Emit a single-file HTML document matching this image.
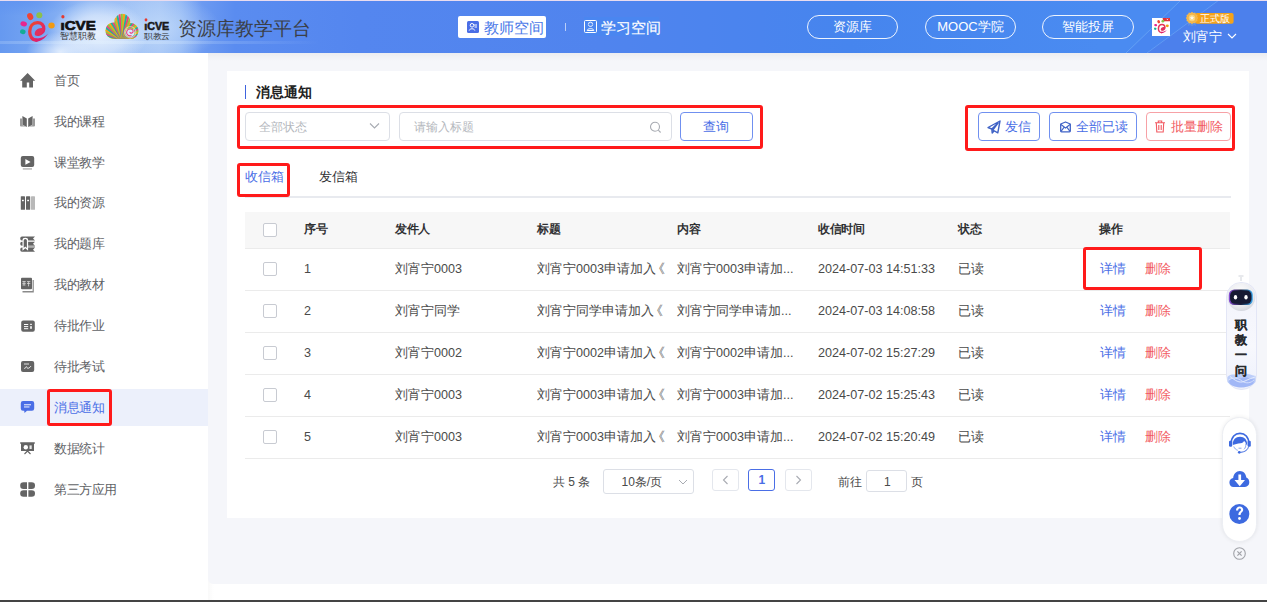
<!DOCTYPE html>
<html><head><meta charset="utf-8">
<style>
*{box-sizing:border-box;margin:0;padding:0}
html,body{width:1267px;height:602px;overflow:hidden;background:#fff;font-family:"Liberation Sans",sans-serif;}
.abs{position:absolute}
#hdr{position:absolute;left:0;top:0;width:1267px;height:53px;overflow:hidden;
 background:
  radial-gradient(ellipse 34px 20px at 60px 52px,rgba(238,246,255,.85),rgba(238,246,255,0) 100%),
  radial-gradient(ellipse 50px 34px at 98px 34px,rgba(236,244,254,.95),rgba(236,244,254,.6) 55%,rgba(236,244,254,0) 100%),
  radial-gradient(ellipse 60px 34px at 160px 28px,rgba(196,220,250,.75),rgba(196,220,250,0) 100%),
  radial-gradient(ellipse 60px 16px at 20px 0px,rgba(94,146,240,.8),rgba(94,146,240,0) 100%),
  linear-gradient(90deg,#6699f0 0px,#76a5f2 40px,#98bdf5 90px,#a5c5f6 160px,#92b8f5 180px,#6c9af1 202px,#5a8cf0 235px,#5486ef 360px,#5084ee 600px,#4a84ee 760px,#4685ee 850px,#4a8bf1 1100px,#4a8bf1 1267px)}
#side{position:absolute;left:0;top:53px;width:208px;height:547px;background:#fff}
#main{position:absolute;left:208px;top:53px;width:1059px;height:531px;background:#f5f6fa;border-bottom-left-radius:5px}
#card{position:absolute;left:227px;top:71px;width:1022px;height:447px;background:#fff}
.nt{position:absolute;left:54px;font-size:12.8px;letter-spacing:-0.4px;line-height:20px;color:#606266;white-space:nowrap}
.nt.on{color:#4a6ee6}
.red{position:absolute;border:3px solid #ff1a1a;border-radius:3px}
.tx{position:absolute;white-space:nowrap;line-height:20px;font-size:13px}
.rowl{position:absolute;left:245px;width:985px;height:1px;background:#ebebeb}
.cb{position:absolute;width:14px;height:14px;border:1px solid #c8cbd2;border-radius:2px;background:#fff}
.c{position:absolute;font-size:12.6px;color:#4a4a4a;white-space:nowrap;line-height:20px}
.btn{position:absolute;height:29px;border:1px solid #7090f0;border-radius:4px;background:#fff}
.pill{position:absolute;top:15px;height:24px;border:1px solid rgba(255,255,255,.9);border-radius:12px;color:#fff;font-size:13px;line-height:22px;text-align:center}
</style></head><body>

<div id="hdr">
 <div class="abs" style="left:0;top:0;width:1267px;height:1px;background:#e9dcef"></div>
 <div class="abs" style="left:0;top:41px;width:320px;height:3px;background:linear-gradient(90deg,rgba(220,238,255,.2),rgba(230,245,255,.3) 120px,rgba(220,238,255,.15) 240px,rgba(220,238,255,0))"></div>
 <!-- logo 1 -->
 <svg class="abs" style="left:0;top:0" width="330" height="53" viewBox="0 0 330 53">
  <defs>
   <linearGradient id="eg" x1="0" y1="0" x2="1" y2="1"><stop offset="0" stop-color="#ec4a2a"/><stop offset=".6" stop-color="#e42a5a"/><stop offset="1" stop-color="#dc1f73"/></linearGradient>
   <clipPath id="cl"><circle cx="113.6" cy="30.6" r="8.2"/><circle cx="122.3" cy="21.6" r="7.9"/><circle cx="130.5" cy="31" r="8"/><rect x="113" y="28" width="18" height="10.8"/></clipPath>
  </defs>
  <ellipse cx="30.2" cy="16.6" rx="2.9" ry="3.6" fill="#ee4536" transform="rotate(-25 30.2 16.6)"/>
  <ellipse cx="39.3" cy="15.3" rx="3" ry="3" fill="#8cc04b"/>
  <ellipse cx="23.7" cy="23.9" rx="3.3" ry="2.4" fill="#e6268f" transform="rotate(15 23.7 23.9)"/>
  <ellipse cx="22.8" cy="31.8" rx="2.8" ry="2.4" fill="#14ad96" transform="rotate(15 22.8 31.8)"/>
  <ellipse cx="51.5" cy="25.5" rx="3.2" ry="3" fill="#f29a12"/>
  <path d="M36.5 40 C32 40 29.6 36 29.7 31.5 C29.8 26 33 22.6 37.5 22.6 C41.5 22.6 44 25.5 43.8 28.8 C43.6 32 41 34 38.3 34.3" fill="none" stroke="url(#eg)" stroke-width="3.3" stroke-linecap="round"/>
  <path d="M34.8 34.5 C34.2 31.5 36.5 28.8 40 28.2 L43.5 27.8 C43.8 31.5 41.5 35 38.5 35.8 C36.8 36.2 35.2 35.8 34.8 34.5 Z" fill="#e2305e"/>
  <path d="M35 41.6 C40 42.2 45 38.5 48 33.8 C44.5 36.8 40.5 38.6 36.5 38.4 Z" fill="#dc2070"/>
  <ellipse cx="62.9" cy="16.8" rx="1.6" ry="1.8" fill="#e5392e"/>
  <text x="60.5" y="30" font-family="Liberation Sans" font-weight="bold" font-size="12.8" fill="#111" stroke="#111" stroke-width=".7" textLength="35.3" lengthAdjust="spacingAndGlyphs">ıCVE</text>
  <text x="60" y="39.2" font-size="8.6" fill="#2e2e2e" textLength="35.6" lengthAdjust="spacingAndGlyphs">智慧职教</text>
  <g clip-path="url(#cl)">
   <rect x="100" y="10" width="45" height="32" fill="#f1e7d0"/>
   <g id="rays" stroke-width="2.1" fill="none"><path d="M122.5 40 L82.5 40.0" stroke="#ee3f7c"/><path d="M122.5 40 L82.7 36.4" stroke="#8cc63f"/><path d="M122.5 40 L83.2 32.8" stroke="#f7a21b"/><path d="M122.5 40 L84.0 29.2" stroke="#1fb59b"/><path d="M122.5 40 L85.1 25.8" stroke="#ee3f7c"/><path d="M122.5 40 L86.5 22.5" stroke="#8cc63f"/><path d="M122.5 40 L88.3 19.3" stroke="#f7a21b"/><path d="M122.5 40 L90.3 16.3" stroke="#1fb59b"/><path d="M122.5 40 L92.6 13.4" stroke="#ee3f7c"/><path d="M122.5 40 L95.1 10.8" stroke="#8cc63f"/><path d="M122.5 40 L97.9 8.5" stroke="#f7a21b"/><path d="M122.5 40 L100.8 6.4" stroke="#1fb59b"/><path d="M122.5 40 L104.0 4.6" stroke="#ee3f7c"/><path d="M122.5 40 L107.3 3.0" stroke="#8cc63f"/><path d="M122.5 40 L110.7 1.8" stroke="#f7a21b"/><path d="M122.5 40 L114.2 0.9" stroke="#1fb59b"/><path d="M122.5 40 L117.8 0.3" stroke="#ee3f7c"/><path d="M122.5 40 L121.4 0.0" stroke="#8cc63f"/><path d="M122.5 40 L125.0 0.1" stroke="#f7a21b"/><path d="M122.5 40 L128.6 0.5" stroke="#1fb59b"/><path d="M122.5 40 L132.2 1.2" stroke="#ee3f7c"/><path d="M122.5 40 L135.7 2.2" stroke="#8cc63f"/><path d="M122.5 40 L139.0 3.6" stroke="#f7a21b"/><path d="M122.5 40 L142.3 5.2" stroke="#1fb59b"/><path d="M122.5 40 L145.3 7.2" stroke="#ee3f7c"/><path d="M122.5 40 L148.2 9.4" stroke="#8cc63f"/><path d="M122.5 40 L150.9 11.8" stroke="#f7a21b"/><path d="M122.5 40 L153.3 14.5" stroke="#1fb59b"/><path d="M122.5 40 L155.5 17.4" stroke="#ee3f7c"/><path d="M122.5 40 L157.4 20.5" stroke="#8cc63f"/><path d="M122.5 40 L159.0 23.7" stroke="#f7a21b"/><path d="M122.5 40 L160.4 27.1" stroke="#1fb59b"/><path d="M122.5 40 L161.4 30.6" stroke="#ee3f7c"/><path d="M122.5 40 L162.1 34.2" stroke="#8cc63f"/><path d="M122.5 40 L162.4 37.8" stroke="#f7a21b"/><path d="M122.5 40 L162.5 41.4" stroke="#1fb59b"/></g>
   <circle cx="130.2" cy="32.2" r="5.6" fill="none" stroke="#f1e7d0" stroke-width="1.2" opacity=".6"/>
   <circle cx="130" cy="32.5" r="4.6" fill="#d6e8fb"/>
   <path d="M131.5 35.5 C129 36.5 126.5 35 126.6 32.3 C126.8 29.5 129.5 28.2 131.8 29.2 C133.5 30 133.6 32.3 132 33 C130.8 33.5 129.8 32.8 130 31.8" fill="none" stroke="#ee3f7c" stroke-width="1.1"/>
   <path d="M127.5 29 C129 27.8 131.5 27.8 133 29" fill="none" stroke="#8cc63f" stroke-width=".9"/>
   </g>
  <ellipse cx="146" cy="19.8" rx="1.4" ry="1.6" fill="#e5392e"/>
  <text x="144.2" y="29.5" font-weight="bold" font-size="10.6" fill="#1a1a1a" stroke="#1a1a1a" stroke-width=".55" textLength="25.1" lengthAdjust="spacingAndGlyphs">ıCVE</text>
  <text x="143.8" y="38.6" font-size="8.4" fill="#2f2f2f" textLength="26.2" lengthAdjust="spacingAndGlyphs">职教云</text>
 </svg>
 <div class="abs" style="left:177.5px;top:15.5px;font-size:18.7px;line-height:26px;color:#3b3f48;white-space:nowrap">资源库教学平台</div>

 <svg class="abs" style="left:1100px;top:0" width="167" height="53" viewBox="1100 0 167 53">
  <polygon points="1100,0 1181,0 1126,53 1100,53" fill="#4a8bf1"/>
  <polygon points="1126,53 1181,0 1219,0 1147,53" fill="#4986f0"/>
  <polygon points="1147,53 1219,0 1267,0 1267,53" fill="#4c80ec"/>
  <path d="M1126 53 L1181 0" stroke="rgba(150,205,255,0.35)" stroke-width="1"/>
  <path d="M1147 53 L1219 0" stroke="rgba(150,205,255,0.3)" stroke-width="1"/>
  <rect x="1100" y="0" width="167" height="1" fill="#e9dcef"/>
 </svg>
 <!-- center tabs -->
 <div class="abs" style="left:458px;top:16px;width:88px;height:22px;background:#fff;border-radius:2px"></div>
 <svg class="abs" style="left:467px;top:21px" width="12" height="12" viewBox="0 0 12 12"><rect x="0" y="0" width="12" height="12" rx="1.5" fill="#4a6ee6"/><circle cx="5" cy="4.3" r="1.8" fill="none" stroke="#fff" stroke-width="1"/><path d="M2.2 9.5 C2.8 7.2 7.2 7.2 7.8 9.5 M7 4 L10 4 M7.5 6 L10 6" stroke="#fff" stroke-width="1" fill="none"/></svg>
 <div class="abs" style="left:484px;top:17.5px;font-size:14.6px;line-height:20px;color:#4a78e8;white-space:nowrap">教师空间</div>
 <div class="abs" style="left:565px;top:23px;width:1px;height:8px;background:rgba(255,255,255,.6)"></div>
 <div class="abs" style="left:584px;top:17px;width:75px;height:19px;background:#4a86f0"></div>
 <svg class="abs" style="left:584px;top:20px" width="13" height="13" viewBox="0 0 13 13"><rect x="0.5" y="0.5" width="12" height="12" rx="1" fill="none" stroke="#fff" stroke-width="1"/><path d="M4 3.5 L6.5 2.2 L9 3.5 M4.3 4.5 C4.3 7 8.7 7 8.7 4.5 M3.2 10.5 C3.5 8 9.5 8 9.8 10.5 Z" stroke="#fff" stroke-width="1" fill="none"/></svg>
 <div class="abs" style="left:601px;top:17.5px;font-size:14.6px;line-height:20px;color:#fff;white-space:nowrap;-webkit-text-stroke:.15px #fff">学习空间</div>

 <!-- right pills -->
 <div class="pill" style="left:807px;width:91px">资源库</div>
 <div class="pill" style="left:925px;width:91px">MOOC学院</div>
 <div class="pill" style="left:1042px;width:92px">智能投屏</div>
 <svg class="abs" style="left:1152px;top:18px" width="18" height="18" viewBox="1152 18 18 18">
  <rect x="1152" y="18" width="18" height="18" fill="#fff"/>
  <path d="M1162.5 18 L1170 18 L1170 21.2 L1163.5 21.2 Z" fill="#e0303a"/>
  <path d="M1166.8 18.8 L1168 20 M1168 18.8 L1166.8 20" stroke="#fff" stroke-width=".6"/>
  <g transform="translate(1161.8 28.4) scale(.46) translate(-37 -31)">
   <ellipse cx="30.2" cy="16.6" rx="2.9" ry="3.6" fill="#ee4536" transform="rotate(-25 30.2 16.6)"/>
   <ellipse cx="39.3" cy="15.3" rx="3" ry="3" fill="#8cc04b"/>
   <ellipse cx="23.7" cy="23.9" rx="3.3" ry="2.4" fill="#e6268f" transform="rotate(15 23.7 23.9)"/>
   <ellipse cx="22.8" cy="31.8" rx="2.8" ry="2.4" fill="#14ad96" transform="rotate(15 22.8 31.8)"/>
   <ellipse cx="49" cy="25.5" rx="3.2" ry="3" fill="#f29a12"/>
   <path d="M36.5 40 C32 40 29.6 36 29.7 31.5 C29.8 26 33 22.6 37.5 22.6 C41.5 22.6 44 25.5 43.8 28.8 C43.6 32 41 34 38.3 34.3" fill="none" stroke="#e5355a" stroke-width="3.3" stroke-linecap="round"/>
   <path d="M34.8 34.5 C34.2 31.5 36.5 28.8 40 28.2 L43.5 27.8 C43.8 31.5 41.5 35 38.5 35.8 C36.8 36.2 35.2 35.8 34.8 34.5 Z" fill="#e2305e"/>
   <path d="M35 41.6 C40 42.2 45 38.5 48 33.8 C44.5 36.8 40.5 38.6 36.5 38.4 Z" fill="#dc2070"/>
  </g>
 </svg>
 <svg class="abs" style="left:1184px;top:10px" width="50" height="18" viewBox="0 0 50 18">
  <rect x="11" y="2.9" width="38.6" height="10.9" rx="2" fill="#f5a31a"/>
  <path d="M4.5 13 L3.8 16 L6 15 L8 16.3 L8 13.5 Z M11.5 13 L12.2 16 L10 15 L8 16.3 L8 13.5 Z" fill="#5b8fe8"/>
  <path d="M8 1.8 L9.4 2.9 L11.2 2.6 L11.8 4.3 L13.5 5 L13.2 6.8 L14.2 8 L13.2 9.2 L13.5 11 L11.8 11.7 L11.2 13.4 L9.4 13.1 L8 14.2 L6.6 13.1 L4.8 13.4 L4.2 11.7 L2.5 11 L2.8 9.2 L1.8 8 L2.8 6.8 L2.5 5 L4.2 4.3 L4.8 2.6 L6.6 2.9 Z" fill="#f7b84a"/>
  <circle cx="8" cy="8" r="3.9" fill="#fbd47a" stroke="#eba73a" stroke-width=".7"/>
  <path d="M8 5.6 L8.7 7.3 L10.4 7.3 L9 8.4 L9.6 10.1 L8 9 L6.4 10.1 L7 8.4 L5.6 7.3 L7.3 7.3 Z" fill="#fff" opacity=".85"/>
 </svg>
 <div class="abs" style="left:1200px;top:13px;font-size:10px;line-height:11px;color:#fff;white-space:nowrap">正式版</div>
 <div class="abs" style="left:1183px;top:27.5px;font-size:13px;line-height:18px;color:#fff;white-space:nowrap">刘宵宁</div>
 <svg class="abs" style="left:1227px;top:32.5px" width="10" height="7" viewBox="0 0 10 7"><path d="M1 1 L5 5 L9 1" fill="none" stroke="#fff" stroke-width="1.1"/></svg>
</div>

<div id="side"></div>
<div class="abs" style="left:208px;top:53px;width:6px;height:547px;background:linear-gradient(90deg,rgba(0,0,0,.022),rgba(0,0,0,0))"></div>
<div id="main"></div>
<div class="abs" style="left:208px;top:53px;width:1059px;height:8px;background:linear-gradient(180deg,rgba(0,0,0,.04),rgba(0,0,0,0))"></div>
<div id="card"></div>

<!-- sidebar -->
<div class="abs" style="left:0;top:389px;width:208px;height:37px;background:#ecf0fb"></div>
<div class="nt" style="top:70.7px">首页</div>
<div class="nt" style="top:111.6px">我的课程</div>
<div class="nt" style="top:152.5px">课堂教学</div>
<div class="nt" style="top:193.4px">我的资源</div>
<div class="nt" style="top:234.3px">我的题库</div>
<div class="nt" style="top:275.2px">我的教材</div>
<div class="nt" style="top:316.1px">待批作业</div>
<div class="nt" style="top:357px">待批考试</div>
<div class="nt on" style="top:397.9px">消息通知</div>
<div class="nt" style="top:438.8px">数据统计</div>
<div class="nt" style="top:479.7px">第三方应用</div>
<svg class="abs" style="left:0;top:0" width="60" height="520" viewBox="0 0 60 520">
 <g fill="#646464">
  <path d="M27.6 73 L20 80.8 L22.2 80.8 L22.2 87.6 L26.8 87.6 L26.8 82.4 L29.2 82.4 L29.2 87.6 L33 87.6 L33 80.8 L35.2 80.8 Z"/>
  <path d="M22.4 116 L26.8 118.6 L26.8 127 L22.4 124.8 Z M32.6 116 L28.2 118.6 L28.2 127 L32.6 124.8 Z"/>
  <path d="M20 118.6 L22.2 118.6 L22.2 125 L26 126.6 L21 126.6 Q20 126.6 20 125.6 Z M35 118.6 L32.8 118.6 L32.8 125 L29 126.6 L34 126.6 Q35 126.6 35 125.6 Z" fill="#9a9a9a"/>
  <rect x="20.8" y="156" width="13.4" height="11" rx="2"/>
  <rect x="22.8" y="168" width="9.2" height="1.8" fill="#c4c4c4"/>
  <rect x="20.8" y="196.2" width="4.2" height="13.6" rx=".6"/>
  <rect x="26" y="196.2" width="4.2" height="13.6" rx=".6"/>
  <rect x="31" y="196.2" width="4" height="13.6" rx=".6" fill="#b8b8b8"/>
  <path d="M22 236.4 L35 236.4 L33 238.5 L35 240.6 L22 240.6 Q20.2 240.6 20.2 238.5 Q20.2 236.4 22 236.4 Z"/>
  <path d="M22 241.8 L35 241.8 L33 243.8 L35 245.8 L22 245.8 Q20.2 245.8 20.2 243.8 Q20.2 241.8 22 241.8 Z"/>
  <rect x="24" y="245.8" width="11" height="1.6" fill="#b0b0b0"/>
  <path d="M22 247.6 L35 247.6 L33 249.7 L35 251.8 L22 251.8 Q20.2 251.8 20.2 249.7 Q20.2 247.6 22 247.6 Z"/>
  <rect x="21" y="277.8" width="11" height="11.4" rx="1"/>
  <path d="M32.6 280 L33.8 280 L33.8 292.6 L22.5 292.6 L22.5 291 L32.6 291 Z" fill="#8a8a8a"/>
  <rect x="21.2" y="320.6" width="13.6" height="11.2" rx="2"/>
  <rect x="21" y="361" width="13.2" height="11" rx="2"/>
  <path d="M20.2 442.2 L34.8 442.2 L34.8 443.8 L20.2 443.8 Z M21 443.8 L34 443.8 L34 451 L21 451 Z"/>
  <path d="M27.5 451 L24.5 454 M27.5 451 L30.5 454" stroke="#646464" stroke-width="1.1"/>
  <path d="M20.2 485.5 A3.3 3.3 0 0 1 23.5 482.2 L27 482.2 L27 489 L23.5 489 A3.3 3.3 0 0 1 20.2 485.7 Z"/>
  <path d="M35 485.5 A3.3 3.3 0 0 0 31.7 482.2 L28.4 482.2 L28.4 489 L31.7 489 A3.3 3.3 0 0 0 35 485.7 Z"/>
  <path d="M20.2 493.5 A3.3 3.3 0 0 0 23.5 496.8 L27 496.8 L27 490.2 L23.5 490.2 A3.3 3.3 0 0 0 20.2 493.5 Z"/>
  <path d="M35 493.5 A3.3 3.3 0 0 1 31.7 496.8 L28.4 496.8 L28.4 490.2 L31.7 490.2 A3.3 3.3 0 0 1 35 493.5 Z"/>
 </g>
 <g fill="#fff">
  <path d="M25.4 159 L30.6 162 L25.4 164.8 Z"/>
  <rect x="22" y="199.8" width="1.8" height="1.4"/><rect x="27.2" y="199.8" width="1.8" height="1.4"/>
  <path d="M22.5 240.2 Q22.5 237.8 25.3 237.8 Q28.1 237.8 28.1 240.2 L28.1 250.8 L25.3 248.3 L22.5 250.8 Z" fill="#fff"/><path d="M23.7 240.6 Q23.7 239 25.3 239 Q26.9 239 26.9 240.6 L26.9 248 L25.3 246.6 L23.7 248 Z" fill="#646464"/>
  <g stroke="#e6e6e6" stroke-width=".7" fill="none"><path d="M22.3 281.6 L25.8 281.6 M24 281 L24 285.3 M22.3 283.4 L25.8 283.4 M22.5 285 L25.5 285 M27 281.6 L30.3 281.6 M28.6 281.6 L28.6 286 L28 286.5 M27 283.5 L30.3 283.5"/></g>
  <rect x="24" y="324" width="4.2" height="1"/><rect x="24" y="326.1" width="4.2" height="1"/><rect x="24" y="328.2" width="4.2" height="1"/>
  <rect x="30.2" y="323.8" width="1.6" height="1.2"/><rect x="30.2" y="326.2" width="1.6" height="2.6"/>
  <path d="M24 364 L29 364 M24.5 369 C25.5 366.5 27 366 27 367.5 C27 369 29.5 368.5 31 366" stroke="#fff" stroke-width="1" fill="none" opacity=".8"/>
  <circle cx="25.8" cy="447.2" r="2.2"/><rect x="29.5" y="445.4" width="2.2" height="3.6" opacity=".85"/>
 </g>
 <path d="M23 401 L32 401 Q34.2 401 34.2 403.2 L34.2 408.6 Q34.2 410.8 32 410.8 L27 410.8 L24.5 413 L24.2 410.8 L23 410.8 Q20.8 410.8 20.8 408.6 L20.8 403.2 Q20.8 401 23 401 Z" fill="#4a6ee6"/>
 <rect x="24" y="404.2" width="7" height="1.1" fill="#fff" opacity=".85"/>
 <rect x="24" y="406.4" width="5.5" height="1.1" fill="#fff" opacity=".85"/>
</svg>
<div class="red" style="left:47px;top:388.5px;width:65px;height:37px"></div>

<!-- CARD CONTENT -->
<div class="abs" style="left:245px;top:84.5px;width:1.3px;height:14px;background:#3f63de"></div>
<div class="tx" style="left:255.5px;top:81.5px;font-size:14.3px;font-weight:bold;color:#222">消息通知</div>
<div class="abs" style="left:245px;top:112px;width:145px;height:29px;border:1px solid #dcdfe6;border-radius:4px;background:#fff"></div>
<div class="tx" style="left:259px;top:116.5px;font-size:12px;color:#b4b7bd">全部状态</div>
<svg class="abs" style="left:369px;top:122px" width="11" height="8" viewBox="0 0 11 8"><path d="M1 1.5 L5.5 6 L10 1.5" fill="none" stroke="#a8abb2" stroke-width="1.1"/></svg>
<div class="abs" style="left:399px;top:112px;width:273px;height:29px;border:1px solid #dcdfe6;border-radius:4px;background:#fff"></div>
<div class="tx" style="left:414px;top:116.5px;font-size:12px;color:#b4b7bd">请输入标题</div>
<svg class="abs" style="left:649px;top:121px" width="14" height="13" viewBox="0 0 14 13"><circle cx="6" cy="5.8" r="4.5" fill="none" stroke="#a8abb2" stroke-width="1.1"/><path d="M9.3 9.2 L11.6 11.5" stroke="#a8abb2" stroke-width="1.1"/></svg>
<div class="btn" style="left:680px;top:112px;width:73px"></div>
<div class="tx" style="left:703px;top:116.5px;font-size:13px;color:#4a6ee6">查询</div>
<div class="red" style="left:236.5px;top:105px;width:526px;height:43.5px"></div>
<div class="btn" style="left:978px;top:112px;width:62px"></div>
<svg class="abs" style="left:986px;top:119px" width="16" height="16" viewBox="0 0 16 16"><path d="M14 2 L2 8.5 L5.8 10 L12 4 L6.8 11 L11.8 13.8 Z M5.8 10 L6.2 14 L8 12" fill="none" stroke="#3f62c6" stroke-width="1.4" stroke-linejoin="round"/></svg>
<div class="tx" style="left:1005px;top:116.5px;font-size:13px;color:#4a6ee6">发信</div>
<div class="btn" style="left:1049px;top:112px;width:88px"></div>
<svg class="abs" style="left:1059px;top:121px" width="13" height="12" viewBox="0 0 13 12"><path d="M1.7 3 L6.5 1 L11.3 3 L11.3 10 Q11.3 10.8 10.5 10.8 L2.5 10.8 Q1.7 10.8 1.7 10 Z" fill="none" stroke="#3f62c6" stroke-width="1.3" stroke-linejoin="round"/><path d="M2 3.5 L6.5 7 L11 3.5 M2 10.3 L5 6.3 M11 10.3 L8 6.3" fill="none" stroke="#3f62c6" stroke-width="1.1"/></svg>
<div class="tx" style="left:1076px;top:116.5px;font-size:13px;color:#4a6ee6">全部已读</div>
<div class="btn" style="left:1146px;top:112px;width:85px;border-color:#f7a1a6"></div>
<svg class="abs" style="left:1154px;top:120px" width="12" height="13" viewBox="0 0 12 13"><path d="M1 2.8 L11 2.8 M4.3 2.8 L4.3 1 L7.7 1 L7.7 2.8 M2.3 2.8 L2.8 12 L9.2 12 L9.7 2.8 M4.8 5 L4.8 10 M7.2 5 L7.2 10" fill="none" stroke="#f25a62" stroke-width="1.1"/></svg>
<div class="tx" style="left:1171px;top:116.5px;font-size:13px;color:#f25a62">批量删除</div>
<div class="red" style="left:965px;top:105px;width:269.5px;height:45.5px"></div>
<div class="abs" style="left:245px;top:196px;width:986px;height:2px;background:#e8eaef"></div>
<div class="tx" style="left:245px;top:167px;font-size:13px;color:#4a6ee6">收信箱</div>
<div class="tx" style="left:319px;top:167px;font-size:13px;color:#303133">发信箱</div>
<div class="red" style="left:236.5px;top:163px;width:53.5px;height:34px"></div>
<div class="abs" style="left:245px;top:212px;width:985px;height:36px;background:#f7f7f7"></div>
<div class="rowl" style="top:248px"></div>
<div class="cb" style="left:263px;top:223px"></div>
<div class="c" style="left:304px;top:219px;font-size:12px;letter-spacing:-0.4px;font-weight:bold;color:#303133">序号</div>
<div class="c" style="left:395px;top:219px;font-size:12px;letter-spacing:-0.4px;font-weight:bold;color:#303133">发件人</div>
<div class="c" style="left:537px;top:219px;font-size:12px;letter-spacing:-0.4px;font-weight:bold;color:#303133">标题</div>
<div class="c" style="left:677px;top:219px;font-size:12px;letter-spacing:-0.4px;font-weight:bold;color:#303133">内容</div>
<div class="c" style="left:818px;top:219px;font-size:12px;letter-spacing:-0.4px;font-weight:bold;color:#303133">收信时间</div>
<div class="c" style="left:958px;top:219px;font-size:12px;letter-spacing:-0.4px;font-weight:bold;color:#303133">状态</div>
<div class="c" style="left:1099px;top:219px;font-size:12px;letter-spacing:-0.4px;font-weight:bold;color:#303133">操作</div>
<div class="rowl" style="top:290px"></div>
<div class="cb" style="left:263px;top:262px"></div>
<div class="c" style="left:304px;top:259px">1</div>
<div class="c" style="left:395px;top:259px">刘宵宁0003</div>
<div class="c" style="left:537px;top:259px;width:129px;overflow:hidden">刘宵宁0003申请加入<span style="margin-left:-4px">《</span></div>
<div class="c" style="left:677px;top:259px">刘宵宁0003申请加...</div>
<div class="c" style="left:818px;top:259px">2024-07-03 14:51:33</div>
<div class="c" style="left:958px;top:259px">已读</div>
<div class="c" style="left:1100px;top:259px;color:#4a6ee6">详情</div>
<div class="c" style="left:1145px;top:259px;color:#f25a62">删除</div>
<div class="rowl" style="top:332px"></div>
<div class="cb" style="left:263px;top:304px"></div>
<div class="c" style="left:304px;top:301px">2</div>
<div class="c" style="left:395px;top:301px">刘宵宁同学</div>
<div class="c" style="left:537px;top:301px;width:129px;overflow:hidden">刘宵宁同学申请加入<span style="margin-left:-4px">《：</span></div>
<div class="c" style="left:677px;top:301px">刘宵宁同学申请加...</div>
<div class="c" style="left:818px;top:301px">2024-07-03 14:08:58</div>
<div class="c" style="left:958px;top:301px">已读</div>
<div class="c" style="left:1100px;top:301px;color:#4a6ee6">详情</div>
<div class="c" style="left:1145px;top:301px;color:#f25a62">删除</div>
<div class="rowl" style="top:374px"></div>
<div class="cb" style="left:263px;top:346px"></div>
<div class="c" style="left:304px;top:343px">3</div>
<div class="c" style="left:395px;top:343px">刘宵宁0002</div>
<div class="c" style="left:537px;top:343px;width:129px;overflow:hidden">刘宵宁0002申请加入<span style="margin-left:-4px">《</span></div>
<div class="c" style="left:677px;top:343px">刘宵宁0002申请加...</div>
<div class="c" style="left:818px;top:343px">2024-07-02 15:27:29</div>
<div class="c" style="left:958px;top:343px">已读</div>
<div class="c" style="left:1100px;top:343px;color:#4a6ee6">详情</div>
<div class="c" style="left:1145px;top:343px;color:#f25a62">删除</div>
<div class="rowl" style="top:416px"></div>
<div class="cb" style="left:263px;top:388px"></div>
<div class="c" style="left:304px;top:385px">4</div>
<div class="c" style="left:395px;top:385px">刘宵宁0003</div>
<div class="c" style="left:537px;top:385px;width:129px;overflow:hidden">刘宵宁0003申请加入<span style="margin-left:-4px">《</span></div>
<div class="c" style="left:677px;top:385px">刘宵宁0003申请加...</div>
<div class="c" style="left:818px;top:385px">2024-07-02 15:25:43</div>
<div class="c" style="left:958px;top:385px">已读</div>
<div class="c" style="left:1100px;top:385px;color:#4a6ee6">详情</div>
<div class="c" style="left:1145px;top:385px;color:#f25a62">删除</div>
<div class="rowl" style="top:458px"></div>
<div class="cb" style="left:263px;top:430px"></div>
<div class="c" style="left:304px;top:427px">5</div>
<div class="c" style="left:395px;top:427px">刘宵宁0003</div>
<div class="c" style="left:537px;top:427px;width:129px;overflow:hidden">刘宵宁0003申请加入<span style="margin-left:-4px">《</span></div>
<div class="c" style="left:677px;top:427px">刘宵宁0003申请加...</div>
<div class="c" style="left:818px;top:427px">2024-07-02 15:20:49</div>
<div class="c" style="left:958px;top:427px">已读</div>
<div class="c" style="left:1100px;top:427px;color:#4a6ee6">详情</div>
<div class="c" style="left:1145px;top:427px;color:#f25a62">删除</div>
<div class="red" style="left:1083px;top:247px;width:118.5px;height:42.5px"></div>
<div class="c" style="left:553px;top:471.5px;font-size:12px">共 5 条</div>
<div class="abs" style="left:603px;top:469px;width:91px;height:25px;border:1px solid #dcdfe6;border-radius:3px"></div>
<div class="c" style="left:621.5px;top:471.5px;font-size:12px">10条/页</div>
<svg class="abs" style="left:678px;top:479px" width="10" height="6" viewBox="0 0 10 6"><path d="M1 1 L5 5 L9 1" fill="none" stroke="#a8abb2" stroke-width="1"/></svg>
<div class="abs" style="left:712px;top:469px;width:27px;height:22px;border:1px solid #e4e7ed;border-radius:3px"></div>
<svg class="abs" style="left:722px;top:475px" width="7" height="10" viewBox="0 0 7 10"><path d="M5.5 1 L1.5 5 L5.5 9" fill="none" stroke="#a8abb2" stroke-width="1.1"/></svg>
<div class="abs" style="left:748px;top:469px;width:27px;height:22px;border:1px solid #4a6ee6;border-radius:3px"></div>
<div class="c" style="left:758.5px;top:469.5px;font-size:12px;font-weight:bold;color:#4a6ee6">1</div>
<div class="abs" style="left:785px;top:469px;width:27px;height:22px;border:1px solid #e4e7ed;border-radius:3px"></div>
<svg class="abs" style="left:795px;top:475px" width="7" height="10" viewBox="0 0 7 10"><path d="M1.5 1 L5.5 5 L1.5 9" fill="none" stroke="#a8abb2" stroke-width="1.1"/></svg>
<div class="c" style="left:838px;top:471.5px;font-size:12px">前往</div>
<div class="abs" style="left:866px;top:470px;width:41px;height:22px;border:1px solid #dcdfe6;border-radius:3px"></div>
<div class="c" style="left:884px;top:471.5px;font-size:12px">1</div>
<div class="c" style="left:910.5px;top:471.5px;font-size:12px">页</div>
<!-- right floating widgets -->
<div class="abs" style="left:1226px;top:281.5px;width:30.5px;height:108px;border-radius:15px;background:linear-gradient(180deg,#f2f3fb,#f7f8fd 60%,#eef1fc);border:1px solid #e3e6f6"></div>
<svg class="abs" style="left:1220px;top:262px" width="45" height="130" viewBox="1220 262 45 130">
 <defs>
  <radialGradient id="hd" cx=".45" cy=".35" r=".7"><stop offset="0" stop-color="#ffffff"/><stop offset=".7" stop-color="#e9eaee"/><stop offset="1" stop-color="#cfd2da"/></radialGradient>
  <linearGradient id="vs" x1="0" x2="1"><stop offset="0" stop-color="#8a4fd8"/><stop offset=".5" stop-color="#1b1f3a"/><stop offset="1" stop-color="#3aa8f0"/></linearGradient>
  <linearGradient id="wv" x1="0" x2="1"><stop offset="0" stop-color="#a8c4f8"/><stop offset=".5" stop-color="#c9b8f4"/><stop offset="1" stop-color="#9fd0f8"/></linearGradient>
 </defs>
 <path d="M1241 281 L1241 277 M1238.5 276 L1243.5 276" stroke="#d0d3da" stroke-width="1"/>
 <circle cx="1241.3" cy="297" r="14" fill="url(#hd)"/>
 <rect x="1228.8" y="289.4" width="24" height="15.6" rx="5.5" fill="url(#vs)"/>
 <rect x="1230.1" y="290.6" width="21.4" height="13.2" rx="4.8" fill="#161a33"/>
 <ellipse cx="1235.5" cy="297.3" rx="1.7" ry="2.3" fill="#fff"/>
 <ellipse cx="1246" cy="297.3" rx="1.7" ry="2.3" fill="#fff"/>
 <path d="M1227.5 377 C1231 372.5 1235 375.5 1240 374 C1245 372.5 1250 374.5 1255.5 376 L1255.5 382 C1250 389 1233 389 1227.5 382 Z" fill="#a9c0f8" opacity=".75"/>
 <path d="M1229 381 C1233 376 1237 380 1241.5 378 C1246 376 1250 379 1254.5 379.5 L1253 384 C1247 388.5 1235 388.5 1230 384 Z" fill="#8fa8f4" opacity=".6"/>
 <path d="M1230 376.5 C1235 380 1239 384 1245 381 C1249 379 1252 378 1255 377" fill="none" stroke="#e8eefe" stroke-width=".9"/>
 <path d="M1228.5 380 C1233 377 1238 378 1242 381 C1246 384 1251 383 1254 380" fill="none" stroke="#dfe7fd" stroke-width=".8"/>
</svg>
<div class="abs" style="left:1235px;top:317.5px;width:12px;font-size:11.5px;line-height:15.4px;font-weight:bold;color:#2a2c30;-webkit-text-stroke:.3px #2a2c30;text-align:center;white-space:normal;word-break:break-all">职教一问</div>

<div class="abs" style="left:1221.5px;top:416.5px;width:35.5px;height:125px;border-radius:18px;background:#fff;box-shadow:0 0 4px rgba(0,0,0,.08);border:1px solid #eceef3"></div>
<svg class="abs" style="left:1226px;top:430px" width="28" height="100" viewBox="1226 430 28 100">
 <g fill="#3d6ae0">
  <path d="M1231.2 443.5 C1231.2 437 1235 433.3 1240 433.3 C1245 433.3 1248.8 437 1248.8 443.5" fill="none" stroke="#3d6ae0" stroke-width="1.7"/>
  <rect x="1229" y="440.8" width="3.2" height="6" rx="1.3"/>
  <rect x="1247.6" y="440.8" width="3.2" height="6" rx="1.3"/>
  <path d="M1232.8 445 C1232.6 439.5 1235.8 436.8 1240 436.8 C1244.3 436.8 1247.3 439.5 1247.2 445 L1246.2 444.5 C1245.8 442.5 1245 441.5 1244 441 C1243.6 442.3 1242.5 443 1240.5 443.3 C1237.5 443.7 1235 444.2 1232.8 445 Z"/>
  <path d="M1233.8 446.5 C1234.5 448.5 1236 449.8 1237.8 450.3 M1245.8 443.5 C1246 446 1245.5 448 1244 449.3" fill="none" stroke="#6d8fe8" stroke-width=".8"/>
  <path d="M1238.5 448.2 L1241.5 448.2" stroke="#6d8fe8" stroke-width=".8"/>
  <path d="M1248.5 446.5 C1248 449.8 1245 452 1240.5 452.3" fill="none" stroke="#3d6ae0" stroke-width="1"/>
  <circle cx="1239.3" cy="452.3" r="1.4"/>
  <path d="M1233.5 487 C1231 487 1229.4 485 1229.4 482.5 C1229.4 480 1231 478.2 1233.2 478 C1233.5 474 1236.3 471 1239.8 471 C1243.3 471 1246 473.8 1246.3 477.5 C1248.2 478 1249.3 480 1249.3 482.3 C1249.3 485 1247.5 487 1245 487 Z"/>
  <circle cx="1239.3" cy="514" r="10"/>
 </g>
 <g fill="#fff">
  
  <path d="M1238.4 474.6 L1241.1 474.6 L1241.1 480 L1245 480 L1239.75 486.3 L1234.5 480 L1238.4 480 Z"/>
  <path d="M1236 510.5 C1236 508 1237.6 506.5 1239.6 506.5 C1241.8 506.5 1243.2 508 1243.2 509.8 C1243.2 512.2 1240.6 512.5 1240.6 515 L1238.4 515 C1238.4 511.5 1241 511.3 1241 509.8 C1241 508.9 1240.4 508.4 1239.6 508.4 C1238.7 508.4 1238.2 509.2 1238.2 510.5 Z"/>
  <circle cx="1239.5" cy="518.5" r="1.4"/>
 </g>
</svg>
<svg class="abs" style="left:1232px;top:546px" width="15" height="15" viewBox="0 0 15 15"><circle cx="7.5" cy="7.5" r="5.8" fill="none" stroke="#a0a2a8" stroke-width="1.1"/><path d="M5.4 5.4 L9.6 9.6 M9.6 5.4 L5.4 9.6" stroke="#a0a2a8" stroke-width="1.2"/></svg>
<div class="abs" style="left:0;top:600px;width:1267px;height:2px;background:#444"></div>
</body></html>
